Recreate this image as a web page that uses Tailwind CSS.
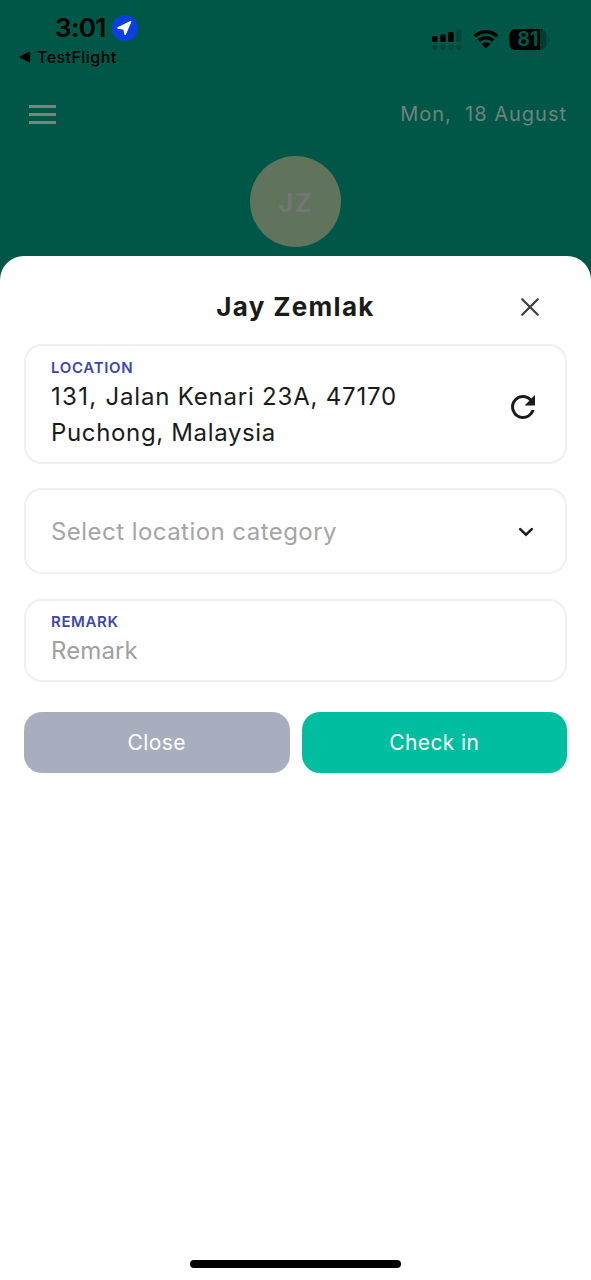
<!DOCTYPE html>
<html lang="en">
<head>
<meta charset="utf-8">
<title>Check in</title>
<script src="https://cdn.jsdelivr.net/npm/@tailwindcss/browser@4"></script>
</head>
<body class="w-[591px] h-[1280px] overflow-hidden bg-[#005748] font-['Inter',sans-serif] flex flex-col">
<header class="h-[256px] shrink-0 flex flex-col">
  <div class="h-[80px] flex justify-between">
    <div class="pt-[13px]">
      <div class="flex items-center h-[30px] pl-[55px] gap-[6px]">
        <span class="text-[26px] leading-[30px] font-semibold w-[51px] tracking-[-0.6px] whitespace-nowrap">3:01</span>
        <svg class="size-[26px]" viewBox="0 0 26 26"><circle cx="13" cy="13" r="13" fill="#0a40e0"/><path d="M18.6 6.8 L6 12.9 L12 13.9 L13.2 19.2 Z" fill="#fff" stroke="#fff" stroke-width="1.6" stroke-linejoin="round"/></svg>
      </div>
      <div class="flex items-center h-[28px] pl-[19px] gap-[6px]">
        <svg class="w-[12px] h-[12px]" viewBox="0 0 12 12"><path d="M1.3 6 L10.5 1.4 V10.6 Z" stroke="#000" stroke-width="1.4" stroke-linejoin="round"/></svg>
        <span class="text-[16px] font-medium tracking-[0.45px]">TestFlight</span>
      </div>
    </div>
    <div class="flex items-start pt-[28px] pr-[40px]">
      <svg class="w-[30px] h-[24px] mr-[11px]" viewBox="0 0 30 24"><rect x="0" y="8" width="5.5" height="6" rx="1.5"/><rect x="8.2" y="6.3" width="5.5" height="7.7" rx="1.5"/><rect x="16.2" y="4" width="5.5" height="10" rx="1.5"/><g opacity=".22"><rect x="24.3" y="1.5" width="5.2" height="12.5" rx="1.5"/><circle cx="2.7" cy="19.2" r="2.7"/><circle cx="10.8" cy="19.2" r="2.7"/><circle cx="18.9" cy="19.2" r="2.7"/><circle cx="26.8" cy="19.2" r="2.7"/></g></svg>
      <svg class="w-[26px] h-[22px] mr-[10px]" viewBox="0 0 26 22"><path d="M1.8 8.2 A16 16 0 0 1 24.2 8.2 M5.8 12.6 A10.3 10.3 0 0 1 20.2 12.6" fill="none" stroke="#000" stroke-width="3.5"/><path d="M8.5 16 A6.5 6.5 0 0 1 17.5 16 L13 20.5 Z"/></svg>
      <svg class="w-[42px] h-[24px]" viewBox="0 0 42 24"><defs><clipPath id="level"><rect x="0" y="0" width="31" height="24"/></clipPath></defs><rect x="0.5" y="1" width="37" height="21" rx="6" opacity=".3"/><rect x="0.5" y="1" width="37" height="21" rx="6" clip-path="url(#level)"/><path d="M39.3 8.3 Q42 11.5 39.3 14.7Z" opacity=".3"/><text x="18.8" y="18.3" text-anchor="middle" font-size="19.5" font-weight="700" fill="#005748">81</text></svg>
    </div>
  </div>
  <div class="h-[68px] flex items-center justify-between pl-[29px] pr-[24px] text-[#71827c]">
    <div class="w-[27px] flex flex-col gap-[5px]"><i class="h-[3px] bg-[#77857f]"></i><i class="h-[3px] bg-[#77857f]"></i><i class="h-[3px] bg-[#77857f]"></i></div>
    <span class="text-[20px] tracking-[1px] whitespace-pre">Mon,  18 August</span>
  </div>
  <div class="mt-[8px] size-[91px] rounded-full bg-[#60735d] self-center flex items-center justify-center text-[26px] font-bold tracking-[1px] text-[#707872] pt-[2px]">JZ</div>
</header>
<main class="flex-1 bg-white rounded-t-[24px] px-[24px] flex flex-col text-[#191c1b]">
  <div class="h-[88px] shrink-0 grid grid-cols-[60px_1fr_60px] items-center pt-[14px]">
    <h1 class="col-start-2 text-center text-[26px] font-bold tracking-[1.3px] pb-[2px]">Jay Zemlak</h1>
    <svg class="size-[20px] ml-[13px]" viewBox="0 0 20 20"><path d="M2.2 2.2 L17.8 17.8 M17.8 2.2 L2.2 17.8" stroke="#3a4043" stroke-width="2.2" stroke-linecap="round"/></svg>
  </div>
  <section class="h-[120px] shrink-0 border-2 border-[#f0f0f0] rounded-[18px] pl-[25px] pr-[27px] flex items-center justify-between">
    <div>
      <div class="text-[15px] leading-[18px] font-semibold tracking-[0.7px] text-[#3d48ab]">LOCATION</div>
      <p class="text-[24px] leading-[36.5px] tracking-[0.8px] pt-[2px] -mb-[2px]"><span class="tracking-[1.3px]">131, </span>Jalan Kenari 23A, 47170<br><span class="tracking-[0.65px]">Puchong, Malaysia</span></p>
    </div>
    <svg class="size-[36px] shrink-0 mt-[6px] -mr-[3px]" viewBox="0 0 24 24" fill="#191c1b"><path d="M17.65 6.35A7.96 7.96 0 0 0 12 4a8 8 0 1 0 7.73 10h-2.08A6 6 0 1 1 12 6c1.66 0 3.14.69 4.22 1.78L13 11h7V4z"/></svg>
  </section>
  <section class="mt-[24px] h-[86px] shrink-0 border-2 border-[#f0f0f0] rounded-[18px] pl-[25px] pr-[31px] flex items-center justify-between">
    <span class="text-[24px] tracking-[0.45px] text-[#a5a5a5] pt-px">Select location category</span>
    <svg class="w-[16px] h-[10px] mt-px" viewBox="0 0 16 10"><path d="M2.2 2.1 L8 7.7 L13.8 2.1" fill="none" stroke="#191c1b" stroke-width="2.5" stroke-linecap="round"/></svg>
  </section>
  <section class="mt-[25px] h-[83px] shrink-0 border-2 border-[#f0f0f0] rounded-[18px] pl-[25px] pt-[11px]">
    <div class="text-[15px] leading-[20px] font-semibold tracking-[0.6px] text-[#3d48ab]">REMARK</div>
    <div class="text-[24px] leading-[38px] tracking-[0.1px] text-[#a0a0a0]">Remark</div>
  </section>
  <div class="mt-[30px] grid grid-cols-2 gap-[12px] h-[61px] text-white text-[21px] tracking-[0.4px]">
    <button class="rounded-[18px] bg-[#a9aebf] pt-px">Close</button>
    <button class="rounded-[18px] bg-[#00be9f] pt-px">Check in</button>
  </div>
  <div class="mt-auto mb-[12px] self-center w-[211px] h-[8px] rounded-full bg-black"></div>
</main>
</body>
</html>
